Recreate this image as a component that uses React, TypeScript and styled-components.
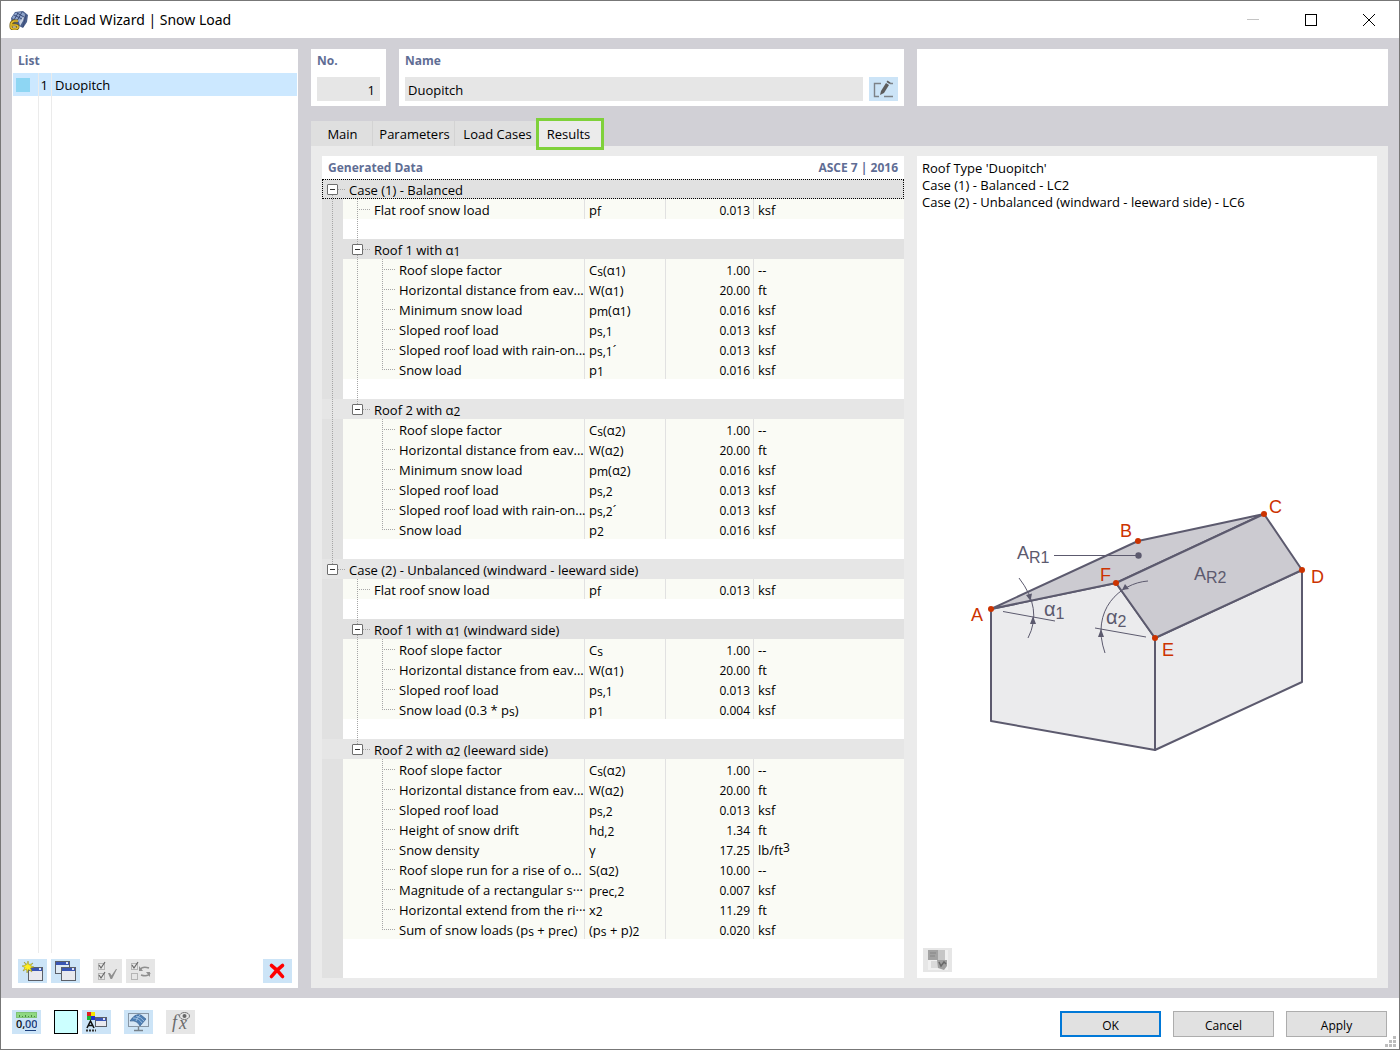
import React, { useState } from 'react';
import styled, { createGlobalStyle, css } from 'styled-components';

const color = {
  frame: '#777777',
  body: '#d1d0d6',
  page: '#ebebeb',
  field: '#e6e6e6',
  heading: '#5f6d94',
  tool: '#cce4f7',
  row: '#fafbf5',
  line: '#e1e1e1',
  ink: '#5c5a6e',
  mark: '#cc3300',
};

const GlobalStyle = createGlobalStyle`
  * { box-sizing: border-box; }
  body {
    margin: 0;
    color: #000;
    background: #fff;
    font: 13px/20px "Open Sans", "Noto Sans", sans-serif;
  }
  button, input { font: inherit; color: inherit; margin: 0; }
`;

const Window = styled.div`
  position: relative;
  display: flex;
  flex-direction: column;
  min-height: 100vh;
  border: 1px solid ${color.frame};
`;

const TitleBar = styled.header`
  display: flex;
  align-items: center;
  height: 37px;
  padding: 0 1px 0 8px;
  gap: 6px;
`;

const Title = styled.h1`
  flex: 1;
  margin: 0;
  font-family: "Noto Sans", sans-serif;
  font-size: 14px;
  font-weight: 400;
`;

const Caption = styled.div`
  display: flex;
`;

const CaptionButton = styled.button`
  display: flex;
  align-items: center;
  justify-content: center;
  width: 58px;
  height: 36px;
  padding: 0;
  border: 0;
  background: none;
`;

const Body = styled.main`
  flex: 1;
  display: grid;
  grid-template-columns: 286px minmax(0, 1fr);
  gap: 13px;
  padding: 11px 11px 10px;
  background: ${color.body};
`;

const Column = styled.div`
  display: flex;
  flex-direction: column;
`;

const Panel = styled.section`
  display: flex;
  flex-direction: column;
  background: #fff;
`;

const Heading = styled.h2`
  margin: 0;
  padding: 0 6px;
  color: ${color.heading};
  font-size: 12px;
  font-weight: 700;
  line-height: 24px;
`;

const HeadingRow = styled.div`
  display: flex;
  justify-content: space-between;
  height: 23px;
`;

const ListBody = styled.div`
  flex: 1;
  display: flex;
  flex-direction: column;
  padding: 0 1px;
`;

const ListRow = styled.div<{ $selected?: boolean }>`
  display: grid;
  grid-template-columns: 26px 13px 1fr;
  flex: ${p => (p.$selected ? '0 0 23px' : '1')};
  background: ${p => (p.$selected ? '#cce8ff' : '#fff')};
`;

const ListCell = styled.div<{ $end?: boolean }>`
  display: flex;
  align-items: center;
  justify-content: ${p => (p.$end ? 'flex-end' : 'flex-start')};
  padding: 0 3px;
  border-right: 1px solid #ebebeb;
  &:last-child { border-right: 0; }
`;

const ItemSwatch = styled.span`
  width: 14px;
  height: 14px;
  background: #8ed6f3;
`;

const ListTools = styled.div`
  display: flex;
  gap: 4px;
  padding: 6px 6px 5px;
`;

const ToolButton = styled.button<{ $push?: boolean; $space?: boolean }>`
  display: flex;
  align-items: center;
  justify-content: center;
  flex: none;
  width: 29px;
  height: 24px;
  padding: 0;
  border: 0;
  background: ${color.tool};
  ${p => p.$space && css`margin-left: 9px;`}
  ${p => p.$push && css`margin-left: auto;`}
  &:disabled { background: ${color.field}; }
`;

const Head = styled.div`
  display: grid;
  grid-template-columns: 75px 505px minmax(0, 1fr);
  gap: 13px;
  margin-bottom: 15px;
`;

const FieldCard = styled.div`
  padding: 0 6px 5px;
  min-height: 57px;
  background: #fff;
`;

const FieldLabel = styled.label`
  display: block;
  height: 28px;
  color: ${color.heading};
  font-size: 12px;
  font-weight: 700;
  line-height: 24px;
`;

const FieldRow = styled.div`
  display: flex;
  gap: 6px;
`;

const Field = styled.input<{ $end?: boolean }>`
  flex: 1;
  min-width: 0;
  height: 24px;
  padding: 2px 5px 0 3px;
  border: 0;
  background: ${color.field};
  text-align: ${p => (p.$end ? 'right' : 'left')};
`;

const Tabs = styled.div`
  display: flex;
  height: 25px;
`;

const Tab = styled.button<{ $width: number; $active: boolean }>`
  position: relative;
  width: ${p => p.$width}px;
  padding: 1px 0 0 2px;
  border: 0;
  border-right: 1px solid #d3d3d3;
  background: #dfdfdf;
  ${p => p.$active && css`
    height: 26px;
    padding: 0 3px 0 0;
    border-right: 0;
    background: ${color.page};
    outline: 3px solid #7fd13b;
  `}
`;

const Page = styled.div`
  flex: 1;
  display: grid;
  grid-template-columns: 582px minmax(0, 1fr);
  gap: 13px;
  padding: 10px 11px;
  background: ${color.page};
`;

const Remainder = styled.div`
  flex: 1;
  width: 21px;
  background: ${color.line};
`;

const Grid = styled.table`
  width: 100%;
  table-layout: fixed;
  border-collapse: separate;
  border-spacing: 0;
`;

const Cell = styled.td<{ $kind?: 'data' | 'blank' | 'gutter' | 'group' | 'groupAlt'; $focus?: boolean }>`
  height: 20px;
  padding: 0;
  background: ${p =>
    ({ data: color.row, blank: '#fff', gutter: '#e1e1e1', group: '#e1e1e1', groupAlt: '#e6e6e6' })[p.$kind ?? 'data']};
  ${p => p.$focus && css`outline: 1px dotted #000; outline-offset: -1px;`}
`;

const LinedCell = styled(Cell)`
  border-right: 1px solid ${color.line};
`;

const SymbolCell = styled(LinedCell)`
  padding: 2px 0 0 4px;
  line-height: 18px;
`;

const ValueCell = styled(LinedCell)`
  padding: 4px 3px 0 0;
  font-size: 12px;
  line-height: 16px;
  text-align: right;
`;

const UnitCell = styled(Cell)`
  padding: 2px 0 0 4px;
  line-height: 18px;
`;

const Tree = styled.div`
  display: flex;
  height: 20px;
`;

type Run = 'none' | 'full' | 'upper' | 'lower';

const Guide = styled.span<{ $width: number; $at: number; $run: Run; $branch?: boolean }>`
  flex: none;
  display: block;
  width: ${p => p.$width}px;
  height: 20px;
  padding: 5px 0 0 ${p => p.$at - 5}px;
  background-image:
    repeating-linear-gradient(to bottom, #a6a6a6 0 1px, transparent 1px 2px),
    repeating-linear-gradient(to right, #a6a6a6 0 1px, transparent 1px 2px);
  background-repeat: no-repeat;
  background-position: ${p => `${p.$at}px ${p.$run === 'lower' ? 10 : 0}px, ${p.$at}px 10px`};
  background-size: ${p =>
    `1px ${p.$run === 'none' ? 0 : p.$run === 'full' ? 20 : 11}px, ${p.$branch ? 13 : 0}px 1px`};
`;

const Expander = styled.button`
  display: flex;
  align-items: center;
  justify-content: center;
  width: 11px;
  height: 11px;
  padding: 0;
  border: 1px solid #6e6e6e;
  border-radius: 1px;
  background: #fff;
  &::before { content: ''; width: 5px; height: 1px; background: #333; }
`;

const Label = styled.span`
  padding-top: 2px;
  white-space: nowrap;
  line-height: 18px;
`;

const Sub = styled.sub`
  position: relative;
  top: 1px;
  font-size: 12px;
  line-height: 1px;
  vertical-align: baseline;
`;

const Sup = styled.sup`
  position: relative;
  top: -3px;
  font-size: 12px;
  line-height: 1px;
  vertical-align: baseline;
`;

const Info = styled.div`
  padding: 4px 5px 0;
  line-height: 17px;
`;

const Line = styled.p`
  margin: 0;
`;

const Space = styled.div<{ $grow: number }>`
  flex: ${p => p.$grow} 0 0;
`;

const Diagram = styled.svg`
  align-self: center;
  width: 374px;
  max-width: 100%;
  height: auto;
  font-family: "Liberation Sans", Arial, sans-serif;
  font-size: 18px;
`;

const PanelFoot = styled.div`
  padding: 0 6px 6px;
`;

const Footer = styled.footer`
  display: flex;
  justify-content: space-between;
  height: 51px;
  padding: 12px 12px 0 11px;
`;

const FooterTools = styled.div`
  display: flex;
  gap: 4px;
`;

const ColorButton = styled.button`
  width: 24px;
  height: 24px;
  margin-left: 9px;
  padding: 0;
  border: 1px solid #000;
  background: #ccffff;
`;

const Actions = styled.div`
  display: flex;
  gap: 12px;
`;

const ActionButton = styled.button<{ $primary?: boolean }>`
  width: 101px;
  height: 26px;
  margin-top: 1px;
  padding: 3px 0 0;
  border: ${p => (p.$primary ? '2px solid #0078d7' : '1px solid #adadad')};
  background: #e1e1e1;
  font-size: 12px;
  line-height: 18px;
`;

const Grip = styled.svg`
  position: absolute;
  right: 3px;
  bottom: 2px;
`;

/* "p{s}" puts s in a subscript, "ft^3^" puts 3 in a superscript. */
function Rich({ text }: { text: string }) {
  const parts = text.split(/(\{[^}]*\}|\^[^^]*\^)/).filter(Boolean);
  return (
    <>
      {parts.map((part, i) =>
        part[0] === '{' ? <Sub key={i}>{part.slice(1, -1)}</Sub>
        : part[0] === '^' ? <Sup key={i}>{part.slice(1, -1)}</Sup>
        : part,
      )}
    </>
  );
}

type Item = [label: string, symbol: string, value: string, unit: string];
interface Group { title: string; items: Item[] }
interface Case { title: string; first: Item; groups: Group[] }

const flatRoof: Item = ['Flat roof snow load', 'p{f}', '0.013', 'ksf'];

const balanced = (n: number): Group => ({
  title: `Roof ${n} with α{${n}}`,
  items: [
    ['Roof slope factor', `C{s}(α{${n}})`, '1.00', '--'],
    ['Horizontal distance from eav...', `W(α{${n}})`, '20.00', 'ft'],
    ['Minimum snow load', `p{m}(α{${n}})`, '0.016', 'ksf'],
    ['Sloped roof load', `p{s,${n}}`, '0.013', 'ksf'],
    ['Sloped roof load with rain-on...', `p{s,${n}}´`, '0.013', 'ksf'],
    ['Snow load', `p{${n}}`, '0.016', 'ksf'],
  ],
});

const cases: Case[] = [
  { title: 'Case (1) - Balanced', first: flatRoof, groups: [balanced(1), balanced(2)] },
  {
    title: 'Case (2) - Unbalanced (windward - leeward side)',
    first: flatRoof,
    groups: [
      {
        title: 'Roof 1 with α{1} (windward side)',
        items: [
          ['Roof slope factor', 'C{s}', '1.00', '--'],
          ['Horizontal distance from eav...', 'W(α{1})', '20.00', 'ft'],
          ['Sloped roof load', 'p{s,1}', '0.013', 'ksf'],
          ['Snow load (0.3 * p{s})', 'p{1}', '0.004', 'ksf'],
        ],
      },
      {
        title: 'Roof 2 with α{2} (leeward side)',
        items: [
          ['Roof slope factor', 'C{s}(α{2})', '1.00', '--'],
          ['Horizontal distance from eav...', 'W(α{2})', '20.00', 'ft'],
          ['Sloped roof load', 'p{s,2}', '0.013', 'ksf'],
          ['Height of snow drift', 'h{d,2}', '1.34', 'ft'],
          ['Snow density', 'γ', '17.25', 'lb/ft^3^'],
          ['Roof slope run for a rise of o...', 'S(α{2})', '10.00', '--'],
          ['Magnitude of a rectangular s···', 'p{rec,2}', '0.007', 'ksf'],
          ['Horizontal extend from the ri···', 'x{2}', '11.29', 'ft'],
          ['Sum of snow loads (p{s} + p{rec})', '(p{s} + p){2}', '0.020', 'ksf'],
        ],
      },
    ],
  },
];

function Gutter({ line, kind = 'gutter' }: { line: boolean; kind?: 'gutter' | 'group' | 'groupAlt' }) {
  return (
    <Cell $kind={kind}>
      <Tree><Guide $width={21} $at={10} $run={line ? 'full' : 'none'} /></Tree>
    </Cell>
  );
}

function ItemRow({ item, deep, last, line }: { item: Item; deep: boolean; last?: boolean; line: [boolean, boolean] }) {
  const [label, symbol, value, unit] = item;
  return (
    <tr>
      <Gutter line={line[0]} />
      <LinedCell>
        <Tree>
          {deep && <Guide $width={25} $at={14} $run={line[1] ? 'full' : 'none'} />}
          <Guide $width={31} $at={14} $run={last ? 'upper' : 'full'} $branch />
          <Label><Rich text={label} /></Label>
        </Tree>
      </LinedCell>
      <SymbolCell><Rich text={symbol} /></SymbolCell>
      <ValueCell>{value}</ValueCell>
      <UnitCell><Rich text={unit} /></UnitCell>
    </tr>
  );
}

function BlankRow({ line }: { line: [boolean, boolean] }) {
  return (
    <tr>
      <Gutter line={line[0]} />
      <Cell $kind="blank" colSpan={4}>
        <Tree><Guide $width={25} $at={14} $run={line[1] ? 'full' : 'none'} /></Tree>
      </Cell>
    </tr>
  );
}

function CaseRows({ data, index }: { data: Case; index: number }) {
  const outer = index < cases.length - 1;
  return (
    <>
      <tr>
        <Cell $kind={index === 0 ? 'group' : 'groupAlt'} $focus={index === 0} colSpan={5}>
          <Tree>
            <Guide $width={27} $at={10} $run={outer ? 'lower' : 'upper'} $branch>
              <Expander aria-label={`Collapse ${data.title}`} />
            </Guide>
            <Label>{data.title}</Label>
          </Tree>
        </Cell>
      </tr>
      <ItemRow item={data.first} deep={false} line={[outer, true]} />
      <BlankRow line={[outer, true]} />
      {data.groups.map((group, g) => {
        const inner = g < data.groups.length - 1;
        const kind = g === 0 ? 'group' : 'groupAlt';
        return (
          <React.Fragment key={group.title}>
            <tr>
              <Gutter line={outer} kind={kind} />
              <Cell $kind={kind} colSpan={4}>
                <Tree>
                  <Guide $width={31} $at={14} $run={inner ? 'full' : 'upper'} $branch>
                    <Expander aria-label={`Collapse roof ${g + 1}`} />
                  </Guide>
                  <Label><Rich text={group.title} /></Label>
                </Tree>
              </Cell>
            </tr>
            {group.items.map((item, i) => (
              <ItemRow key={item[0]} item={item} deep last={i === group.items.length - 1} line={[outer, inner]} />
            ))}
            {(inner || outer) && <BlankRow line={[outer, inner]} />}
          </React.Fragment>
        );
      })}
    </>
  );
}

function AppIcon() {
  return (
    <svg width="20" height="20" viewBox="0 0 20 20">
      <path d="M2 8 6 2 14 1 19 5 18 12 14 18 10 16 3 15Z" fill="#4a5f8c" />
      <path d="M3 8 6 3 13 2 16 4 10 12Z" fill="#8ea5cc" />
      <path d="M16 4 10 12 11 16 14 11Z" fill="#c9d2e2" />
      <path d="M5 5l8 4M8 3l7 4M9 3 5 10M13 2 8 11M17 5l-3 12" stroke="#3a4b78" fill="none" />
      <path d="M9 11H5Q2 12 2 15v2q0 2 3 2h1q3 0 3-2t-3-2H3" fill="none" stroke="#6f5b12" strokeWidth="3" />
      <path d="M9 11H5Q2 12 2 15v2q0 2 3 2h1q3 0 3-2t-3-2H3" fill="none" stroke="#e3bc2c" strokeWidth="1.600" />
    </svg>
  );
}

function EditIcon() {
  return (
    <svg width="21" height="18" viewBox="0 0 21 18" fill="none" stroke="#7d8288">
      <path d="M8 3.500H1.500V16.500H6M17 3.500h3M11 16.500h9" strokeWidth="1.400" />
      <path d="M7 15l1-4 5-8 3 2-5 8Z" fill="#5c5c5c" stroke="none" />
      <path d="M13.500 2l1-1.500 3 2-1 1.500Z" fill="#5c5c5c" stroke="none" />
    </svg>
  );
}

function MiniWindow({ x, y, w, h, pale }: { x: number; y: number; w: number; h: number; pale?: boolean }) {
  return (
    <g>
      <rect x={x + 0.5} y={y + 0.5} width={w} height={h} fill={pale ? '#dfeaf4' : '#e9e9ee'} stroke="#5b5f68" />
      <rect x={x + 1} y={y + 1} width={w - 1} height="3" fill="#3a55b4" />
      <rect x={x + w - 3} y={y + 1} width="2" height="2" fill="#dde4f6" />
    </g>
  );
}

function NewIcon() {
  return (
    <svg width="21" height="20" viewBox="0 0 21 20">
      <MiniWindow x={6} y={6} w={14} h={13} />
      <path d="M6 0 7 4 11 2 8.500 5 12 6 8.500 7 10 11 6.500 8.500 5 12 4.500 8 1 10 3 6.500 0 5 4 4 2 1 5 3.500Z" fill="#ffee20" stroke="#8c8420" strokeWidth=".5" />
    </svg>
  );
}

function CopyIcon() {
  return (
    <svg width="21" height="20" viewBox="0 0 21 20">
      <MiniWindow x={0} y={0} w={14} h={12} pale />
      <MiniWindow x={6} y={6} w={14} h={13} />
    </svg>
  );
}

function CheckAllIcon({ swap }: { swap?: boolean }) {
  return (
    <svg width="21" height="20" viewBox="0 0 21 20" fill="none" stroke="#8f8f8f">
      <rect x="1.500" y="2.500" width="6" height="6" stroke="#b5b5b5" />
      <rect x="1.500" y="12.500" width="6" height="6" stroke="#b5b5b5" />
      <path d="M2 4l2 3 4-6" stroke="#666" strokeWidth="1.200" />
      {swap ? (
        <>
          <path d="M10 9c2-4 6-3 9-2M20 12c-2 4-6 3-9 2" strokeWidth="1.600" />
          <path d="M9 5v5h4zM20 16v-5h-4z" fill="#8f8f8f" stroke="none" />
        </>
      ) : (
        <>
          <path d="M2 14l2 3 4-6" stroke="#666" strokeWidth="1.200" />
          <path d="M11 12l2 0 1.500 2.500L19 8l1 0-5 10h-1.500Z" fill="#8f8f8f" stroke="none" />
        </>
      )}
    </svg>
  );
}

function DeleteIcon() {
  return (
    <svg width="19" height="18" viewBox="0 0 19 18">
      <path d="M3.500 3.500C7 6 11 10 14.500 14.500M14.500 3.500C11 6 7 10 3.500 14.500" stroke="#f00" strokeWidth="3.600" strokeLinecap="round" fill="none" />
    </svg>
  );
}

function UnitsIcon() {
  return (
    <svg width="21" height="20" viewBox="0 0 21 20">
      <rect x=".5" y=".5" width="20" height="5" fill="#8fd882" stroke="#7fc474" />
      <path d="M3.500 3v2M6.500 4v1M9.500 3v2M12.500 4v1M15.500 3v2M18.500 4v1" stroke="#4b8a42" />
      <g fontSize="11" fontWeight="600" fontFamily="Open Sans, sans-serif">
        <text x="0" y="16" fill="#111">0,</text>
        <text x="9" y="16" fill="#1c3f7c">00</text>
      </g>
      <path d="M9 18.500h11" stroke="#1c3f7c" />
    </svg>
  );
}

function DisplayIcon() {
  return (
    <svg width="21" height="20" viewBox="0 0 21 20">
      <rect x="1" y="0" width="4" height="4" fill="#e02020" />
      <rect x="5" y="0" width="4" height="4" fill="#f5e400" />
      <rect x="1" y="4" width="4" height="4" fill="#18b830" />
      <rect x="5" y="4" width="4" height="4" fill="#2030d0" />
      <path d="M1 16 4.500 9 8 16M2.500 13.500h4" stroke="#111" strokeWidth="1.600" fill="none" />
      <path d="M0 18.500h10" stroke="#333" strokeWidth="2" strokeDasharray="2 1" />
      <MiniWindow x={9} y={5} w={11} h={9} />
    </svg>
  );
}

function ViewIcon() {
  return (
    <svg width="21" height="20" viewBox="0 0 21 20">
      <rect x=".5" y="1.500" width="20" height="13" fill="#d5e6f5" stroke="#8796a5" />
      <path d="M2 9Q7 1 13 3L18 7 12 14Q9 8 2 9Z" fill="#4d7fb5" stroke="#2c5484" strokeWidth=".6" />
      <path d="M5 6q6 0 9 5M8 4q5 1 8 5M12 3q-3 3-4 6" stroke="#bcd6ee" strokeWidth=".7" fill="none" />
      <path d="M10.500 15v3M6 18.500h9" stroke="#77828c" strokeWidth="1.400" />
    </svg>
  );
}

function FormulaIcon() {
  return (
    <svg width="22" height="22" viewBox="0 0 22 22">
      <g fill="#6a6a6a" fontFamily="Liberation Serif, serif" fontStyle="italic">
        <text x="2" y="17" fontSize="18">f</text>
        <text x="9" y="18" fontSize="18">x</text>
      </g>
      <ellipse cx="14.500" cy="5" rx="5" ry="3.500" fill="#e6e6e6" stroke="#777" />
      <circle cx="14.500" cy="5" r="2" fill="#666" />
    </svg>
  );
}

function PictureIcon() {
  return (
    <svg width="20" height="20" viewBox="0 0 20 20">
      <rect width="20" height="20" fill="#f0f0f0" />
      <rect width="10" height="10" fill="#a2a2a2" />
      <rect x="10" width="7" height="10" fill="#c6c6c6" />
      <path d="M2 3h6M2 6h5" stroke="#868686" />
      <path d="M3 11h8v7H3Z" fill="#dadada" />
      <path d="M9 10h10v6l-3 4-6-2Z" fill="#a0a0a0" />
      <path d="M11 12l2 4 3-4 2 2" stroke="#686868" fill="none" strokeWidth="1.500" />
    </svg>
  );
}

function Roof() {
  const corners = [[31, 119], [178, 51], [304, 24], [342, 80], [195, 148], [156, 93]];
  const letters: [string, number, number][] = [
    ['A', 11, 131], ['B', 160, 47], ['C', 309, 23], ['D', 351, 93], ['E', 202, 166], ['F', 140, 91],
  ];
  return (
    <Diagram viewBox="0 1 374 270" role="img" aria-label="Duopitch roof with areas and slope angles">
      <g stroke={color.ink} strokeWidth="2" strokeLinejoin="round">
        <path d="M31 119 156 93 195 148V260L31 231Z" fill="#ebebed" />
        <path d="M195 148 342 80V192L195 260Z" fill="#ebebed" />
        <path d="M31 119 178 51 304 24 156 93Z" fill="#cccbd1" />
        <path d="M156 93 304 24 342 80 195 148Z" fill="#cccbd1" />
      </g>
      <g stroke={color.ink} strokeWidth="1" fill="none">
        <path d="M94 65.500H178M43 121.500 95 131M135 138 186 147" />
        <path d="M59 88Q83 119 68 148M188 91C160 93 130 120 145 163" />
      </g>
      <g fill={color.ink}>
        <circle cx="178.500" cy="65.500" r="3.200" />
        <path d="M70.500 111 66 105 72 103.500ZM73 126l-3 8h6ZM141 139l-3 8h6ZM162 100 165 94 169 99Z" />
      </g>
      <g fill={color.ink}>
        <text x="57" y="69">A<tspan dy="4" fontSize="16">R1</tspan></text>
        <text x="234" y="90">A<tspan dy="3" fontSize="16">R2</tspan></text>
        <text x="84" y="126" fontSize="20">α<tspan dy="3" fontSize="16">1</tspan></text>
        <text x="146" y="134" fontSize="20">α<tspan dy="3" fontSize="16">2</tspan></text>
      </g>
      <g fill={color.mark}>
        {corners.map(([x, y]) => <circle key={`${x}-${y}`} cx={x} cy={y} r="3" />)}
        {letters.map(([text, x, y]) => <text key={text} x={x} y={y}>{text}</text>)}
      </g>
    </Diagram>
  );
}

const tabs: [string, number][] = [['Main', 62], ['Parameters', 82], ['Load Cases', 84], ['Results', 62]];

export default function App() {
  const [active, setActive] = useState('Results');
  return (
    <Window>
      <GlobalStyle />
      <TitleBar>
        <AppIcon />
        <Title>Edit Load Wizard | Snow Load</Title>
        <Caption>
          <CaptionButton aria-label="Minimize">
            <svg width="12" height="12"><path d="M0 5.500h12" stroke="#c4c4c4" /></svg>
          </CaptionButton>
          <CaptionButton aria-label="Maximize">
            <svg width="12" height="12"><rect x=".5" y=".5" width="11" height="11" fill="none" stroke="#000" /></svg>
          </CaptionButton>
          <CaptionButton aria-label="Close">
            <svg width="12" height="12"><path d="M0 0 12 12M12 0 0 12" stroke="#000" /></svg>
          </CaptionButton>
        </Caption>
      </TitleBar>

      <Body>
        <Panel>
          <Heading>List</Heading>
          <ListBody>
            <ListRow $selected>
              <ListCell><ItemSwatch /></ListCell>
              <ListCell $end>1</ListCell>
              <ListCell>Duopitch</ListCell>
            </ListRow>
            <ListRow>
              <ListCell />
              <ListCell />
              <ListCell />
            </ListRow>
          </ListBody>
          <ListTools>
            <ToolButton aria-label="New"><NewIcon /></ToolButton>
            <ToolButton aria-label="Copy"><CopyIcon /></ToolButton>
            <ToolButton aria-label="Select all" disabled $space><CheckAllIcon /></ToolButton>
            <ToolButton aria-label="Invert selection" disabled><CheckAllIcon swap /></ToolButton>
            <ToolButton aria-label="Delete" $push><DeleteIcon /></ToolButton>
          </ListTools>
        </Panel>

        <Column>
          <Head>
            <FieldCard>
              <FieldLabel htmlFor="number">No.</FieldLabel>
              <FieldRow><Field id="number" defaultValue="1" readOnly $end /></FieldRow>
            </FieldCard>
            <FieldCard>
              <FieldLabel htmlFor="name">Name</FieldLabel>
              <FieldRow>
                <Field id="name" defaultValue="Duopitch" readOnly />
                <ToolButton aria-label="Edit name"><EditIcon /></ToolButton>
              </FieldRow>
            </FieldCard>
            <FieldCard />
          </Head>

          <Tabs role="tablist">
            {tabs.map(([name, width]) => (
              <Tab key={name} role="tab" aria-selected={name === active} $width={width} $active={name === active} onClick={() => setActive(name)}>
                {name}
              </Tab>
            ))}
          </Tabs>

          <Page>
            <Panel>
              <HeadingRow>
                <Heading>Generated Data</Heading>
                <Heading as="div">ASCE 7 | 2016</Heading>
              </HeadingRow>
              <Grid>
                <colgroup>
                  <col width="21" /><col width="242" /><col width="81" /><col width="88" /><col />
                </colgroup>
                <tbody>
                  {cases.map((data, i) => <CaseRows key={data.title} data={data} index={i} />)}
                </tbody>
              </Grid>
              <Remainder />
            </Panel>

            <Panel>
              <Info>
                <Line>Roof Type 'Duopitch'</Line>
                <Line>Case (1) - Balanced - LC2</Line>
                <Line>Case (2) - Unbalanced (windward - leeward side) - LC6</Line>
              </Info>
              <Space $grow={3} />
              <Roof />
              <Space $grow={2} />
              <PanelFoot>
                <ToolButton aria-label="Picture" disabled><PictureIcon /></ToolButton>
              </PanelFoot>
            </Panel>
          </Page>
        </Column>
      </Body>

      <Footer>
        <FooterTools>
          <ToolButton aria-label="Units"><UnitsIcon /></ToolButton>
          <ColorButton aria-label="Color" />
          <ToolButton aria-label="Display settings"><DisplayIcon /></ToolButton>
          <ToolButton aria-label="View" $space><ViewIcon /></ToolButton>
          <ToolButton aria-label="Formula" disabled $space><FormulaIcon /></ToolButton>
        </FooterTools>
        <Actions>
          <ActionButton $primary>OK</ActionButton>
          <ActionButton>Cancel</ActionButton>
          <ActionButton>Apply</ActionButton>
        </Actions>
      </Footer>
      <Grip width="11" height="11" viewBox="0 0 11 11" fill="#bdbdbd">
        <path d="M8 0h3v3H8ZM4 4h3v3H4ZM8 4h3v3H8ZM0 8h3v3H0ZM4 8h3v3H4ZM8 8h3v3H8Z" />
      </Grip>
    </Window>
  );
}
